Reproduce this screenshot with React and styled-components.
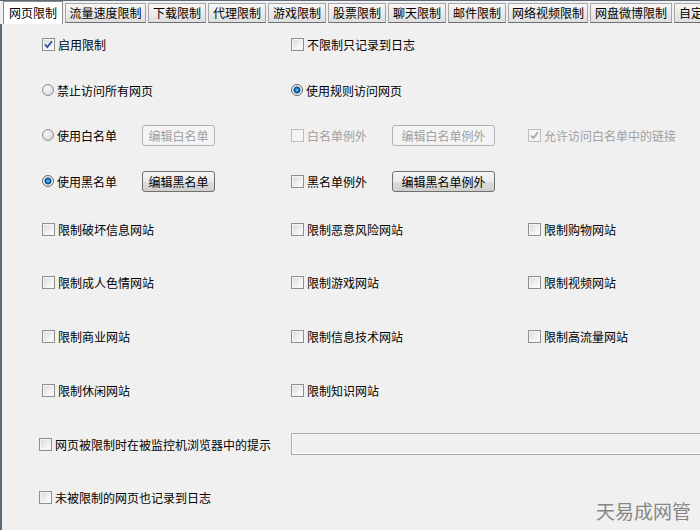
import React from 'react';
import styled, { createGlobalStyle, css } from 'styled-components';

const GlobalStyle = createGlobalStyle`
  html, body {
    margin: 0;
    padding: 0;
    background: #f0f0f0;
    overflow: hidden;
  }
  body {
    font-family: "Noto Sans CJK SC", "Liberation Sans", sans-serif;
    font-size: 12px;
    color: #000;
  }
`;

const Window = styled.div`
  position: relative;
  width: 700px;
  height: 530px;
  overflow: hidden;
  background: #f0f0f0;
`;

const TabBar = styled.div`
  display: flex;
  align-items: flex-end;
  gap: 2px;
  height: 24px;
  padding-left: 3px;
  border-top: 1px solid #5d6b79;
  box-sizing: border-box;
  background: #f0f0f0;
  white-space: nowrap;
`;

const Tab = styled.div`
  flex: none;
  box-sizing: border-box;
  width: ${(p) => p.$w}px;
  text-align: center;
  line-height: 18px;
  height: 20px;
  margin-bottom: 1px;
  border: 1px solid #a5a5a5;
  border-bottom-color: #6f6f6f;
  background: linear-gradient(#f7f7f7, #dedede);
  ${(p) =>
    p.$active &&
    css`
      height: 23px;
      margin-bottom: 0;
      line-height: 21px;
      background: #fff;
      border-color: #8c8c8c;
      border-bottom: none;
    `}
`;

const Panel = styled.div`
  height: 506px;
  box-sizing: border-box;
  border-left: 2px solid #5d6b79;
  padding: 9px 0 0 40px;
`;

const Row = styled.div`
  display: grid;
  grid-template-columns: 249px 237px 1fr;
  align-items: center;
  height: 22px;
  margin-top: ${(p) => p.$gap || 0}px;
`;

const Cell = styled.div`
  display: flex;
  align-items: center;
  white-space: nowrap;
  margin-left: ${(p) => p.$shift || 0}px;
`;

const Label = styled.span`
  margin-left: 3px;
  color: ${(p) => (p.$disabled ? '#a0a0a0' : '#000')};
`;

const Box = styled.span`
  flex: none;
  position: relative;
  width: 13px;
  height: 13px;
  box-sizing: border-box;
  border: 1px solid ${(p) => (p.$disabled ? '#bcbcbc' : '#8e8f8f')};
  background: ${(p) =>
    p.$disabled ? '#f4f4f4' : 'linear-gradient(135deg, #d8d8d8, #f6f6f6 70%, #fff)'};
  box-shadow: inset 0 0 0 1px #f4f4f4;
`;

const Circle = styled.span`
  flex: none;
  position: relative;
  width: 12px;
  height: 12px;
  box-sizing: border-box;
  border-radius: 50%;
  border: 1px solid #8f8f8f;
  background: radial-gradient(circle at 40% 35%, #fafafa 0, #e2e2e2 55%, #cfcfcf 100%);
  ${(p) =>
    p.$on &&
    css`
      border-color: #6a6a6a;
      background: radial-gradient(
        circle at 50% 50%,
        #7fd0ff 0,
        #1a86d0 1.6px,
        #0a3d74 3.2px,
        #e6e6e6 3.8px,
        #f4f4f4 100%
      );
    `}
`;

const Check = ({ color }) => (
  <svg width="11" height="11" viewBox="0 0 11 11" style={{ position: 'absolute', left: 0, top: 0 }}>
    <path d="M2 5.5 L4.3 8 L9 2.2" fill="none" stroke={color} strokeWidth="1.8" />
  </svg>
);

const CheckBox = ({ checked, disabled, children, shift }) => (
  <Cell $shift={shift}>
    <Box $disabled={disabled}>{checked && <Check color={disabled ? '#a8a8a8' : '#2c4fa0'} />}</Box>
    <Label $disabled={disabled}>{children}</Label>
  </Cell>
);

const Radio = ({ on, children }) => (
  <Cell>
    <Circle $on={on} />
    <Label>{children}</Label>
  </Cell>
);

const Button = styled.button`
  flex: none;
  margin-left: ${(p) => p.$ml}px;
  width: ${(p) => p.$w}px;
  height: 21px;
  padding: 0;
  font-family: inherit;
  font-size: 12px;
  border-radius: 3px;
  border: 1px solid #707070;
  background: linear-gradient(#f3f3f3 0%, #ebebeb 50%, #dddddd 51%, #cfcfcf 100%);
  color: #000;
  &:disabled {
    border-color: #adb2b5;
    background: #f4f4f4;
    color: #a0a0a0;
  }
`;

const TextField = styled.div`
  grid-column: 2 / 4;
  width: 480px;
  height: 22px;
  box-sizing: border-box;
  border: 1px solid #ababab;
  border-right: none;
  box-shadow: inset 1px -1px 0 #fff;
  background: #f0f0f0;
`;

const Watermark = styled.div`
  position: absolute;
  right: 9px;
  bottom: 6px;
  font-size: 19px;
  color: #868686;
`;

const tabs = [
  ['网页限制', 60],
  ['流量速度限制', 81],
  ['下载限制', 58],
  ['代理限制', 58],
  ['游戏限制', 58],
  ['股票限制', 58],
  ['聊天限制', 58],
  ['邮件限制', 58],
  ['网络视频限制', 80],
  ['网盘微博限制', 82],
  ['自定义限制', 70],
];

const categories = [
  ['限制破坏信息网站', '限制恶意风险网站', '限制购物网站'],
  ['限制成人色情网站', '限制游戏网站', '限制视频网站'],
  ['限制商业网站', '限制信息技术网站', '限制高流量网站'],
  ['限制休闲网站', '限制知识网站'],
];

const catGaps = [26, 31, 32, 32];

export default function App() {
  return (
    <Window>
      <GlobalStyle />
      <TabBar>
        {tabs.map(([name, w], i) => (
          <Tab key={name} $w={w} $active={i === 0}>
            {name}
          </Tab>
        ))}
      </TabBar>
      <Panel>
        <Row>
          <CheckBox checked>启用限制</CheckBox>
          <CheckBox>不限制只记录到日志</CheckBox>
        </Row>
        <Row $gap={24}>
          <Radio>禁止访问所有网页</Radio>
          <Radio on>使用规则访问网页</Radio>
        </Row>
        <Row $gap={23}>
          <Cell>
            <Circle />
            <Label>使用白名单</Label>
            <Button $ml={25} $w={73} disabled>编辑白名单</Button>
          </Cell>
          <Cell>
            <Box $disabled />
            <Label $disabled>白名单例外</Label>
            <Button $ml={25} $w={103} disabled>编辑白名单例外</Button>
          </Cell>
          <CheckBox checked disabled>允许访问白名单中的链接</CheckBox>
        </Row>
        <Row $gap={24}>
          <Cell>
            <Circle $on />
            <Label>使用黑名单</Label>
            <Button $ml={25} $w={73}>编辑黑名单</Button>
          </Cell>
          <Cell>
            <Box />
            <Label>黑名单例外</Label>
            <Button $ml={25} $w={103}>编辑黑名单例外</Button>
          </Cell>
        </Row>
        {categories.map((row, i) => (
          <Row key={i} $gap={catGaps[i]}>
            {row.map((c) => (
              <CheckBox key={c}>{c}</CheckBox>
            ))}
          </Row>
        ))}
        <Row $gap={32}>
          <CheckBox shift={-3}>网页被限制时在被监控机浏览器中的提示</CheckBox>
          <TextField />
        </Row>
        <Row $gap={31}>
          <CheckBox shift={-3}>未被限制的网页也记录到日志</CheckBox>
        </Row>
      </Panel>
      <Watermark>天易成网管</Watermark>
    </Window>
  );
}
